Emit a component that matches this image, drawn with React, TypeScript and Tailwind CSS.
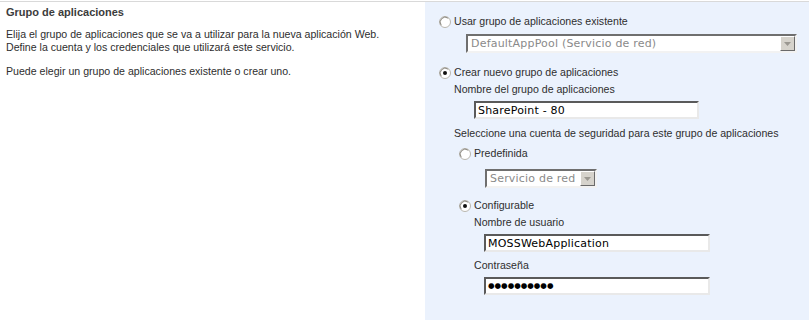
import React from 'react';

const Radio: React.FC<{ checked?: boolean }> = ({ checked }) => (
  <svg width="12" height="12" viewBox="0 0 12 12" className="shrink-0">
    <circle cx="6" cy="6" r="5.5" fill="#ffffff" stroke="#b9b6ae" />
    <path d="M2.2 9.2 A5 5 0 0 1 9.2 2.2" fill="none" stroke="#8a877f" strokeWidth="1" />
    {checked && <circle cx="6" cy="6" r="2" fill="#111111" />}
  </svg>
);

const SelectBox: React.FC<{ value: string; width: string }> = ({ value, width }) => (
  <div
    className={`${width} h-[19px] flex items-stretch bg-white border-2 border-t-[#6f6f6f] border-l-[#6f6f6f] border-b-[#f2f2f2] border-r-[#f2f2f2]`}
  >
    <div className="flex-1 pl-[3px] flex items-center text-[11px] text-[#8a8a8a] overflow-hidden whitespace-nowrap font-['DejaVu_Sans',sans-serif] tracking-[0.2px]">
      {value}
    </div>
    <div className="w-[15px] bg-[#d6d3cc] border border-t-white border-l-white border-b-[#6a6a6a] border-r-[#6a6a6a] flex items-center justify-center">
      <svg width="7" height="4" viewBox="0 0 7 4">
        <path d="M0 0 H7 L3.5 4 Z" fill="#9b9891" />
      </svg>
    </div>
  </div>
);

const TextBox: React.FC<{ value: string; width: string }> = ({ value, width }) => (
  <input
    readOnly
    type="text"
    value={value}
    className={`${width} h-[18px] bg-white pl-[2px] text-[11px] text-black outline-none font-['DejaVu_Sans',sans-serif] tracking-[0.2px] border-2 border-t-[#5a5a5a] border-l-[#5a5a5a] border-b-[#e9e9e9] border-r-[#e9e9e9]`}
  />
);

const App: React.FC = () => {
  return (
    <div className="w-[809px] h-[320px] bg-white font-['Liberation_Sans',Arial,sans-serif] text-[10.6px] text-[#2e2e2e] overflow-hidden">
      <div className="h-[1px] bg-white" />
      <div className="flex h-[319px] border-t border-[#d9d9d9]">
        {/* Description */}
        <div className="w-[425px] pl-[6px] pt-[3px] leading-[12.5px]">
          <div className="font-bold text-[#3c3c3c] text-[11px] leading-[14px]">Grupo de aplicaciones</div>
          <div className="mt-[9px]">
            Elija el grupo de aplicaciones que se va a utilizar para la nueva aplicación Web.
            <br />
            Define la cuenta y los credenciales que utilizará este servicio.
          </div>
          <div className="mt-[12px]">Puede elegir un grupo de aplicaciones existente o crear uno.</div>
        </div>

        {/* Options */}
        <div className="flex-1 bg-[#ebf2fd] pl-[14px] pt-[13px] leading-[13px]">
          <label className="flex items-center gap-[3px] h-[13px]">
            <Radio />
            <span>Usar grupo de aplicaciones existente</span>
          </label>
          <div className="ml-[27px] mt-[6px]">
            <SelectBox value="DefaultAppPool (Servicio de red)" width="w-[331px]" />
          </div>

          <label className="flex items-center gap-[3px] h-[13px] mt-[13px]">
            <Radio checked />
            <span>Crear nuevo grupo de aplicaciones</span>
          </label>
          <div className="ml-[15px] mt-[4px] h-[13px]">Nombre del grupo de aplicaciones</div>
          <div className="ml-[35px] mt-[5px]">
            <TextBox value="SharePoint - 80" width="w-[225px]" />
          </div>

          <div className="ml-[15px] mt-[8px] h-[13px]">Seleccione una cuenta de seguridad para este grupo de aplicaciones</div>

          <label className="ml-[20px] flex items-center gap-[3px] h-[13px] mt-[7px]">
            <Radio />
            <span>Predefinida</span>
          </label>
          <div className="ml-[46px] mt-[9px]">
            <SelectBox value="Servicio de red" width="w-[112px]" />
          </div>

          <label className="ml-[20px] flex items-center gap-[3px] h-[13px] mt-[11px]">
            <Radio checked />
            <span>Configurable</span>
          </label>
          <div className="ml-[35px] mt-[4px] h-[13px]">Nombre de usuario</div>
          <div className="ml-[45px] mt-[5px]">
            <TextBox value="MOSSWebApplication" width="w-[226px]" />
          </div>
          <div className="ml-[35px] mt-[7px] h-[13px]">Contraseña</div>
          <div className="ml-[45px] mt-[5px]">
            <div className="w-[226px] h-[18px] bg-white pl-[2px] flex items-center text-[7.5px] leading-none tracking-[0px] text-black font-['DejaVu_Sans',sans-serif] border-2 border-t-[#5a5a5a] border-l-[#5a5a5a] border-b-[#e9e9e9] border-r-[#e9e9e9]">
              ●●●●●●●●●●
            </div>
          </div>
        </div>
      </div>
    </div>
  );
};

export default App;
